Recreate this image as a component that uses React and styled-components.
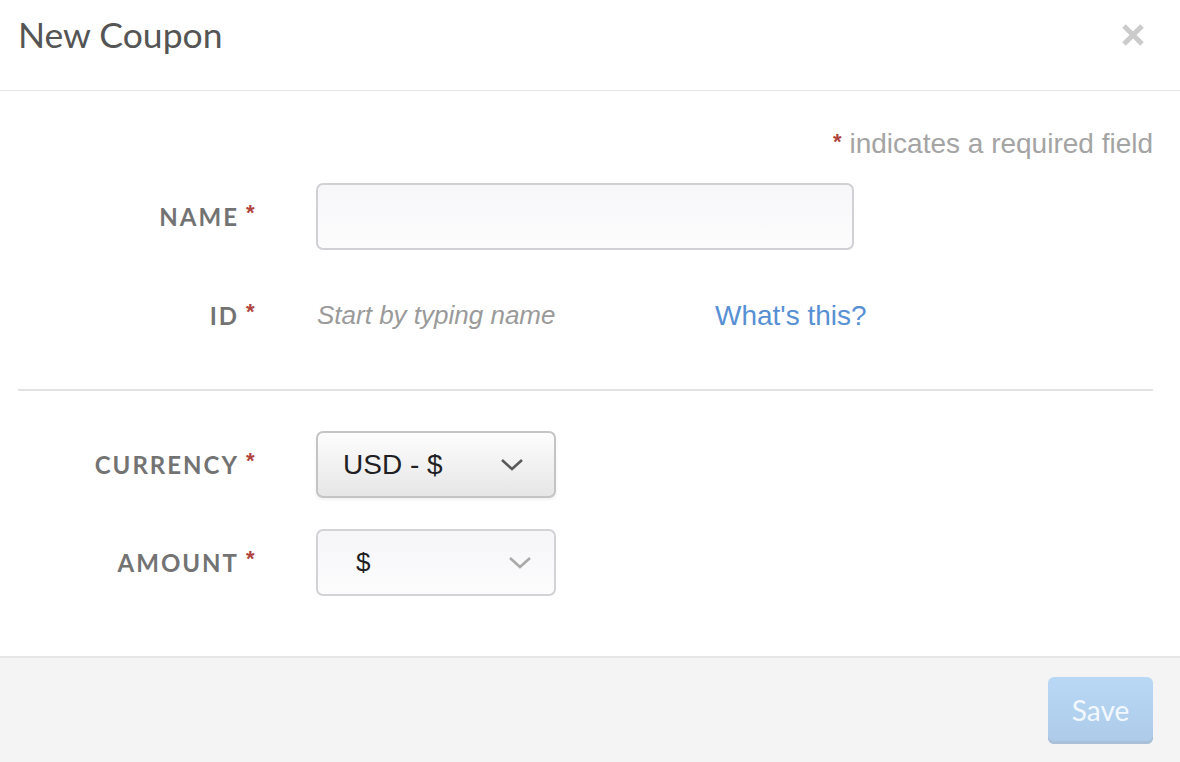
import styled, { createGlobalStyle } from "styled-components";

const GlobalStyle = createGlobalStyle`
  html, body {
    margin: 0;
    padding: 0;
    background: #fff;
  }
  body {
    font-family: "Liberation Sans", Arial, sans-serif;
  }
  * { box-sizing: border-box; }
`;

const Modal = styled.div`
  width: 1180px;
  height: 762px;
  display: flex;
  flex-direction: column;
  background: #fff;
`;

const Header = styled.div`
  height: 91px;
  flex: none;
  display: flex;
  align-items: center;
  justify-content: space-between;
  padding: 0 35px 20px 18px;
  border-bottom: 1px solid #e5e5e5;
`;

const Title = styled.h1`
  margin: 0;
  font-family: Lato, "Open Sans", sans-serif;
  font-weight: 400;
  font-size: 35.5px;
  line-height: 40px;
  color: #555;
`;

const CloseButton = styled.button`
  border: none;
  background: none;
  padding: 0;
  width: 24px;
  height: 24px;
  cursor: pointer;
  display: flex;
`;

const Body = styled.div`
  flex: 1;
  padding: 35px 27px 0 18px;
`;

const RequiredNote = styled.div`
  text-align: right;
  font-size: 28px;
  line-height: 32px;
  color: #a4a4a4;
  margin-bottom: 23px;
`;

const Star = styled.span`
  color: #b0433d;
  font-size: 22px;
  font-weight: 700;
  vertical-align: 4px;
  margin-right: 8px;
`;

const Row = styled.div`
  display: flex;
  align-items: center;
  height: 67px;
  margin-top: ${(p) => p.$gap || 0}px;
`;

const Label = styled.label`
  width: 238px;
  flex: none;
  display: flex;
  justify-content: flex-end;
  align-items: center;
  font-family: Lato, "Open Sans", sans-serif;
  font-weight: 700;
  font-size: 24px;
  letter-spacing: 2px;
  color: #737373;

  span {
    font-family: "Liberation Sans", Arial, sans-serif;
    font-size: 22px;
    letter-spacing: 0;
    color: #b0433d;
    margin-left: 7px;
    margin-top: -8px;
    width: 10px;
  }
`;

const Control = styled.div`
  margin-left: 60px;
  display: flex;
  align-items: center;
`;

const TextInput = styled.input`
  width: 538px;
  height: 67px;
  border: 2px solid #d0d1d5;
  border-radius: 7px;
  background: linear-gradient(#f7f7f9, #fcfcfd);
  font-size: 24px;
  padding: 0 18px;
  outline: none;
`;

const Placeholder = styled.span`
  font-style: italic;
  font-size: 26px;
  color: #9a9a9a;
  width: 399px;
  padding-left: 1px;
`;

const HelpLink = styled.a`
  font-size: 28px;
  color: #5890d4;
  text-decoration: none;
  cursor: pointer;
`;

const Divider = styled.hr`
  border: none;
  border-top: 2px solid #e2e2e2;
  margin: 40px 0 40px 0;
`;

const Select = styled.div`
  width: 240px;
  height: 67px;
  border-radius: 7px;
  display: flex;
  align-items: center;
  justify-content: space-between;
  padding: ${(p) => (p.$light ? "0 22px 0 38px" : "0 30px 0 25px")};
  font-size: ${(p) => (p.$light ? "26px" : "28px")};
  color: #1f1f24;
  border: 2px solid ${(p) => (p.$light ? "#d2d3d7" : "#c4c4c4")};
  background: ${(p) =>
    p.$light
      ? "linear-gradient(#f6f6f8, #fcfcfd)"
      : "linear-gradient(#fdfdfd, #e6e6e6)"};
  box-shadow: ${(p) => (p.$light ? "none" : "0 2px 3px rgba(0,0,0,0.06)")};
`;

const Footer = styled.div`
  height: 106px;
  flex: none;
  border-top: 2px solid #e6e6e6;
  background: #f4f4f4;
  display: flex;
  align-items: center;
  justify-content: flex-end;
  padding: 0 27px 0 0;
`;

const SaveButton = styled.button`
  width: 105px;
  height: 67px;
  border: none;
  border-radius: 6px;
  background: linear-gradient(#b8d8f5, #adcbe8);
  box-shadow: inset 0 -3px 0 #a9c0d8;
  color: #f3f8fd;
  font-family: Lato, "Open Sans", sans-serif;
  font-size: 28px;
  cursor: default;
`;

const Chevron = ({ color }) => (
  <svg width="24" height="14" viewBox="0 0 24 14">
    <path d="M2 2 L12 11 L22 2" fill="none" stroke={color} strokeWidth="2.6" />
  </svg>
);

export default function App() {
  return (
    <>
      <GlobalStyle />
      <Modal>
        <Header>
          <Title>New Coupon</Title>
          <CloseButton aria-label="Close">
            <svg width="24" height="24" viewBox="0 0 24 24">
              <path d="M3 3 L21 21 M21 3 L3 21" stroke="#cbcbcb" strokeWidth="5" />
            </svg>
          </CloseButton>
        </Header>
        <Body>
          <RequiredNote>
            <Star>*</Star>indicates a required field
          </RequiredNote>
          <Row>
            <Label>
              NAME<span>*</span>
            </Label>
            <Control>
              <TextInput type="text" />
            </Control>
          </Row>
          <Row $gap={32}>
            <Label>
              ID<span>*</span>
            </Label>
            <Control>
              <Placeholder>Start by typing name</Placeholder>
              <HelpLink>What's this?</HelpLink>
            </Control>
          </Row>
          <Divider />
          <Row>
            <Label>
              CURRENCY<span>*</span>
            </Label>
            <Control>
              <Select>
                USD - $
                <Chevron color="#5a5a5a" />
              </Select>
            </Control>
          </Row>
          <Row $gap={31}>
            <Label>
              AMOUNT<span>*</span>
            </Label>
            <Control>
              <Select $light>
                $
                <Chevron color="#a9a9a9" />
              </Select>
            </Control>
          </Row>
        </Body>
        <Footer>
          <SaveButton>Save</SaveButton>
        </Footer>
      </Modal>
    </>
  );
}
